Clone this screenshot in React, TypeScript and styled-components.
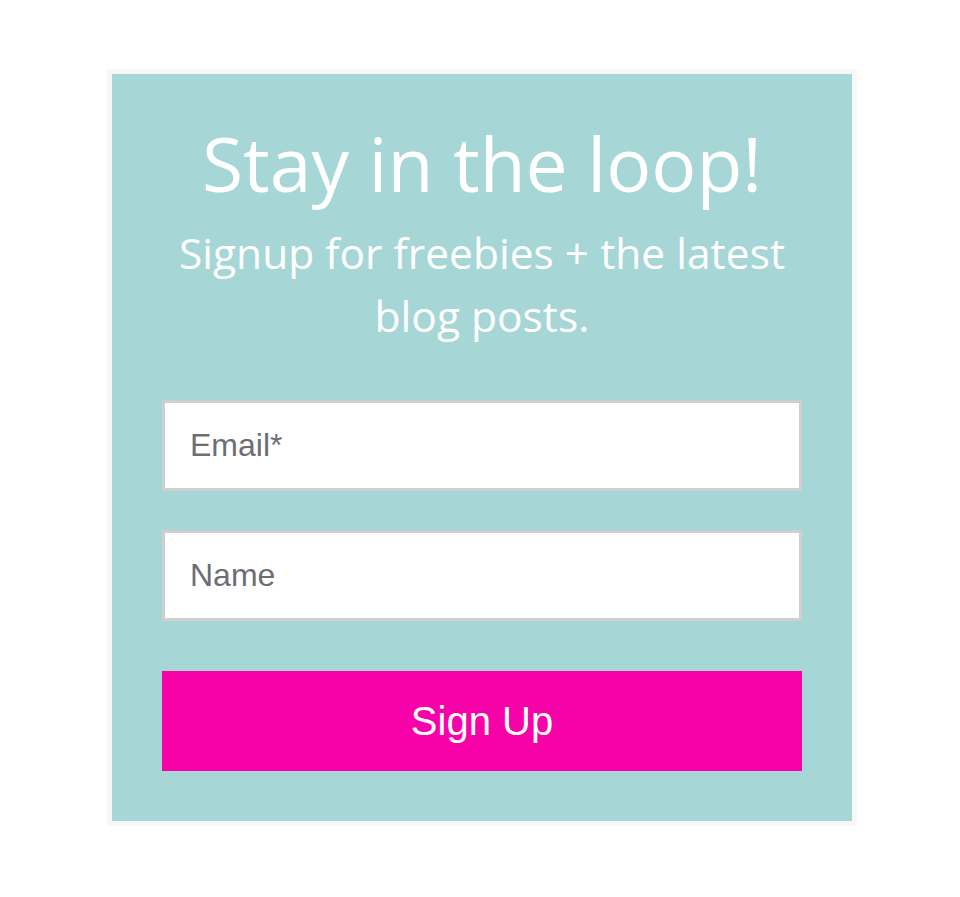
import { createGlobalStyle } from "styled-components"
import styled from "styled-components"

const GlobalStyle = createGlobalStyle`
  html, body {
    margin: 0;
    padding: 0;
    background: #fff;
  }
  * {
    box-sizing: border-box;
  }
`

export default function App() {
  return (
    <>
      <GlobalStyle />
      <Page>
        <Card>
          <Title>Stay in the loop!</Title>
          <SubTitle>Signup for freebies + the latest blog posts.</SubTitle>
          <Form onSubmit={(e) => e.preventDefault()}>
            <Field type="email" placeholder="Email*" />
            <Field type="text" placeholder="Name" />
            <Button type="submit">Sign Up</Button>
          </Form>
        </Card>
      </Page>
    </>
  )
}

const Page = styled.div`
  padding: 69px 0 0 107px;
`
const Card = styled.div`
  width: 750px;
  border: 5px solid #f7f7f7;
  background: #a6d7d6;
  padding: 45px 50px 50px;
  display: flex;
  flex-direction: column;
  align-items: center;
  font-family: "Open Sans", sans-serif;
  color: #fff;
  text-align: center;
`
const Title = styled.h1`
  margin: 0;
  font-size: 75px;
  font-weight: 400;
  line-height: 88px;
`
const SubTitle = styled.p`
  margin: 14px 0 0;
  font-size: 42.5px;
  line-height: 63px;
`
const Form = styled.form`
  align-self: stretch;
  margin-top: 53px;
  display: flex;
  flex-direction: column;
  gap: 39px;
`
const Field = styled.input`
  height: 91px;
  border: 3px solid #cfcfcf;
  background: #fff;
  padding: 0 25px;
  font-family: "Liberation Sans", Arial, sans-serif;
  font-size: 32px;
  color: #333;
  outline: none;
  &::placeholder {
    color: #6d6e73;
  }
`
const Button = styled.button`
  margin-top: 11px;
  height: 100px;
  border: none;
  background: #f702a9;
  color: #fff;
  font-family: "Liberation Sans", Arial, sans-serif;
  font-size: 40px;
  cursor: pointer;
`
